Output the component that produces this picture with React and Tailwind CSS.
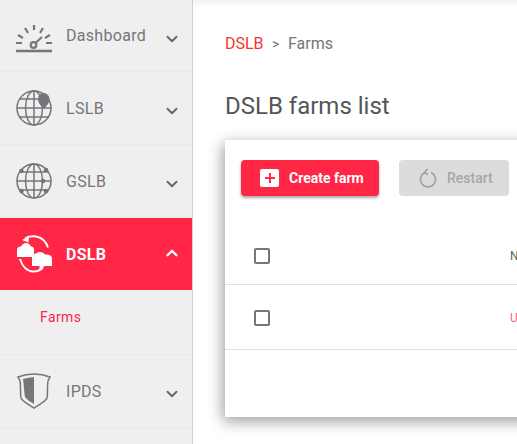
import React from 'react';
import { ChevronDown, ChevronUp } from 'lucide-react';

const DashboardIcon = () => (
  <svg width="36" height="36" viewBox="0 0 36 36" fill="none" stroke="#77757a" strokeWidth="2">
    <path d="M0 33h36" strokeWidth="2.600" />
    <path d="M0 25h6M30 25h6M2 17l5 3M34 17l-5 3M9 10l3 5M27 10l-3 5M18 7v5" strokeWidth="2.200" />
    <circle cx="17.500" cy="27" r="2.800" strokeWidth="2.200" />
    <path d="M19.500 25l6.500-6" strokeWidth="2" />
  </svg>
);

const GlobeLines = () => (
  <>
    <circle cx="18" cy="18" r="17" />
    <ellipse cx="18" cy="18" rx="8.500" ry="17" />
    <path d="M18 1v34M1 18h34M4 9h28M4 27h28" />
  </>
);

const LslbIcon = () => (
  <svg width="36" height="36" viewBox="0 0 36 36" fill="none" stroke="#77757a" strokeWidth="1.500">
    <GlobeLines />
    <path d="M28 19c-3-3-6-6-6-10 0-3.500 2.500-6 5.500-6s6 2.500 6 6c0 4-3 7-5.500 10z" fill="#77757a" stroke="none" />
  </svg>
);

const GslbIcon = () => (
  <svg width="36" height="36" viewBox="0 0 36 36" fill="none" stroke="#77757a" strokeWidth="1.500">
    <GlobeLines />
    <g fill="#77757a" stroke="none">
      <circle cx="5.500" cy="8" r="2.300" />
      <circle cx="30" cy="7" r="2.300" />
      <circle cx="27" cy="18" r="2.300" />
      <circle cx="5.500" cy="28" r="2.300" />
      <circle cx="30" cy="28" r="2.300" />
    </g>
  </svg>
);

const DslbIcon = () => (
  <svg width="36" height="38" viewBox="0 0 36 38" fill="none" stroke="#fff" strokeWidth="2">
    <path d="M9 3.500C12 1.500 16 1 20 1.500c6 1 10 5 12 11" />
    <path d="M4 24c2 7 7 12 13 12.500 4 .3 7-1 10-4" />
    <path d="M6 5l7-3.500-.5 6z" fill="#fff" stroke="none" />
    <path d="M30 30l-6.500 5 0-6z" fill="#fff" stroke="none" />
    <path d="M1 22V14.500c0-2 2-3 4-3 1-2 3-3.500 5-3.500s4 1.500 5 3.500c2 0 3 1.500 3 3V22z" fill="#fff" stroke="none" />
    <path d="M16 31V22c0-2 2-3 4-3.500 1-1 2.500-1.500 4-1.500 2 0 4 1 5 2.500 3.500 0 7 1 7 3.500v8z" fill="#fff" stroke="none" />
  </svg>
);

const ShieldIcon = () => (
  <svg width="34" height="36" viewBox="0 0 34 36" fill="none" stroke="#77757a" strokeWidth="1.500">
    <path d="M1 4c5-2 10-3 16-3s11 1 16 3l-2 4c-1 6 0 12-1 17-1 3-8 7-13 10-5-3-12-7-13-10-1-5 0-11-1-17z" />
    <path d="M6 6c3-1 6-1 11-2v27c-3-2-7-4-9-7-1-5-1-12-2-18z" fill="#77757a" stroke="none" />
  </svg>
);

const SideItem = ({ icon, label, height, labelClass = 'mt-[2px]' }) => (
  <div className={`flex items-center pl-4 pr-[11px] border-b border-[#e9e9e9] text-[#77757a] ${height}`}>
    <div className="w-9 mr-[14px] flex justify-center shrink-0">{icon}</div>
    <span className={`flex-1 text-base tracking-[0.3px] ${labelClass}`}>{label}</span>
    <ChevronDown size={18} strokeWidth={2.500} className="text-[#666666] mt-[6px]" />
  </div>
);

export default function App() {
  return (
    <div className="flex w-[517px] h-[444px] overflow-hidden bg-white font-['Roboto',sans-serif]">
      {/* Sidebar */}
      <aside className="w-[193px] shrink-0 bg-[#efefef] border-r border-[#cfcfcf]">
        <SideItem icon={<DashboardIcon />} label="Dashboard" height="h-[72px]" labelClass="" />
        <SideItem icon={<LslbIcon />} label="LSLB" height="h-[73px]" />
        <SideItem icon={<GslbIcon />} label="GSLB" height="h-[73px]" />
        <div className="flex items-center h-[72px] pl-4 pr-[11px] bg-[#ff2646] text-white">
          <div className="w-9 mr-[14px] flex justify-center shrink-0"><DslbIcon /></div>
          <span className="flex-1 mt-[2px] text-base font-bold tracking-[0.3px]">DSLB</span>
          <ChevronUp size={18} strokeWidth={3} className="-mt-[2px]" />
        </div>
        <div className="h-[65px] pl-10 pt-[17px] border-b border-[#e9e9e9] text-[#ff2646] text-sm tracking-[0.4px]">
          Farms
        </div>
        <SideItem icon={<ShieldIcon />} label="IPDS" height="h-[73px]" />
      </aside>

      {/* Main */}
      <main className="flex-1 min-w-0 pl-8 pt-[34px] shadow-[inset_0_10px_10px_-10px_rgba(0,0,0,0.12)]">
        <div className="flex items-center gap-[8.500px] text-base h-5 text-[#757575]">
          <span className="text-[#f2362f]">DSLB</span>
          <span className="text-sm">&gt;</span>
          <span>Farms</span>
        </div>
        <h1 className="mt-9 text-2xl leading-8 text-[#555555]">DSLB farms list</h1>

        <div className="mt-[18px] w-[700px] h-[277px] bg-white shadow-[-2px_4px_14px_rgba(0,0,0,0.4)]">
          <div className="flex gap-5 pl-4 pt-5">
            <button className="flex items-center gap-[10px] w-[138px] h-9 pl-[19px] rounded bg-[#ff2646] text-white text-sm font-bold shadow-[0_2px_3px_rgba(0,0,0,0.35)]">
              <span className="flex items-center justify-center w-[19px] h-[18px] rounded-[2px] bg-white">
                <svg width="10" height="10" viewBox="0 0 10 10" stroke="#ff2646" strokeWidth="2"><path d="M5 0v10M0 5h10" /></svg>
              </span>
              Create farm
            </button>
            <button className="flex items-center gap-[10px] w-[110px] h-9 pl-5 rounded bg-[#dcdcdc] text-[#a6a6a6] text-sm font-medium">
              <svg width="18" height="20" viewBox="0 0 18 20" fill="none" stroke="#a0a0a0" strokeWidth="1.600">
                <path d="M6 4.500a7.500 7.500 0 1 0 6 0" />
                <path d="M8.500 1L5.500 4.500l3.500 2" />
              </svg>
              Restart
            </button>
          </div>

          {/* Table */}
          <div className="flex items-center h-[89px] pl-[29px] pt-8 border-b border-[#e0e0e0] text-xs text-[#616161]">
            <span className="w-4 h-4 border-2 border-[#757575] rounded-[2px]" />
            <span className="ml-[240px]">Name</span>
          </div>
          <div className="flex items-center h-[65px] pl-[29px] pt-[1px] border-b border-[#e0e0e0] text-xs text-[#ff5c75]">
            <span className="w-4 h-4 border-2 border-[#757575] rounded-[2px]" />
            <span className="ml-[240px]">U</span>
          </div>
        </div>
      </main>
    </div>
  );
}
